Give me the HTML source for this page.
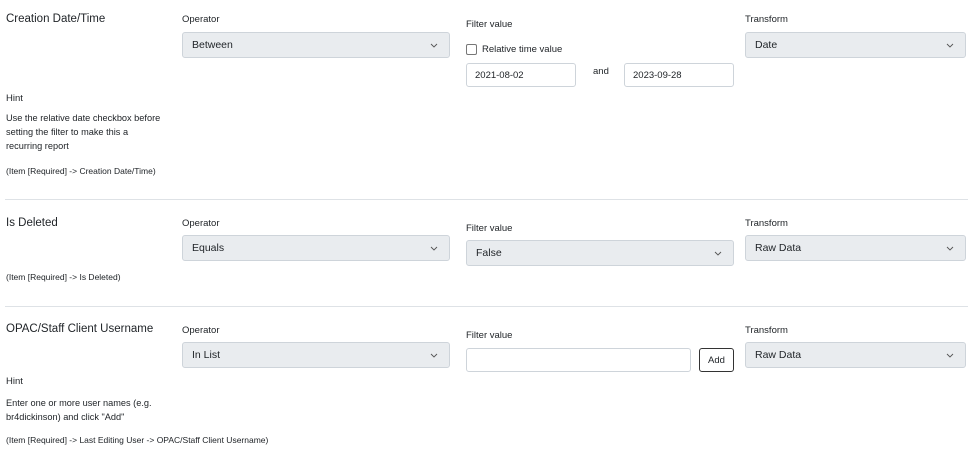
<!DOCTYPE html>
<html><head><meta charset="utf-8"><style>
body{margin:0;width:975px;height:456px;background:#fff;font-family:"Liberation Sans",sans-serif;color:#212529;position:relative;overflow:hidden}
.a{position:absolute;white-space:nowrap}
.t{font-size:11.5px}
.l{font-size:9.5px}
.s{font-size:8.5px}
.sel{position:absolute;background:#e9ecef;border:1px solid #ced4da;border-radius:3px;box-sizing:border-box;font-size:10.5px;padding-left:9px;display:flex;align-items:center}
.sel svg{position:absolute;right:11px;top:50%;margin-top:-2px}
.inp{position:absolute;border:1px solid #ced4da;border-radius:3px;box-sizing:border-box;font-size:9.5px;padding-left:8px;display:flex;align-items:center;background:#fff}
.hr{position:absolute;left:5px;right:7px;height:1px;background:#dee2e6}
</style></head><body>
<svg width="0" height="0" style="position:absolute"><defs><symbol id="c" viewBox="0 0 8 5"><path d="M1 1l3 3 3-3" fill="none" stroke="#555" stroke-width="0.9"/></symbol></defs></svg>

<div class="a t" style="left:6px;top:13px">Creation Date/Time</div>
<div class="a l" style="left:182px;top:14px">Operator</div>
<div class="sel" style="left:182px;top:32px;width:268px;height:26px">Between<svg width="8" height="5"><use href="#c"/></svg></div>
<div class="a l" style="left:466px;top:19px">Filter value</div>
<div class="a" style="left:466px;top:44px;width:11px;height:11px;border:1px solid #777;border-radius:2px;box-sizing:border-box"></div>
<div class="a l" style="left:482px;top:44px">Relative time value</div>
<div class="inp" style="left:466px;top:63px;width:110px;height:24px">2021-08-02</div>
<div class="a l" style="left:593px;top:66px">and</div>
<div class="inp" style="left:624px;top:63px;width:110px;height:24px">2023-09-28</div>
<div class="a l" style="left:745px;top:14px">Transform</div>
<div class="sel" style="left:745px;top:32px;width:221px;height:26px">Date<svg width="8" height="5"><use href="#c"/></svg></div>
<div class="a l" style="left:6px;top:93px">Hint</div>
<div class="a l" style="left:6px;top:111px;line-height:14px;font-size:9.2px">Use the relative date checkbox before<br>setting the filter to make this a<br>recurring report</div>
<div class="a s" style="left:6px;top:166px">(Item [Required] -&gt; Creation Date/Time)</div>
<div class="hr" style="top:199px"></div>

<div class="a t" style="left:6px;top:217px">Is Deleted</div>
<div class="a l" style="left:182px;top:218px">Operator</div>
<div class="sel" style="left:182px;top:235px;width:268px;height:26px">Equals<svg width="8" height="5"><use href="#c"/></svg></div>
<div class="a l" style="left:466px;top:223px">Filter value</div>
<div class="sel" style="left:466px;top:240px;width:268px;height:26px">False<svg width="8" height="5"><use href="#c"/></svg></div>
<div class="a l" style="left:745px;top:218px">Transform</div>
<div class="sel" style="left:745px;top:235px;width:221px;height:26px">Raw Data<svg width="8" height="5"><use href="#c"/></svg></div>
<div class="a s" style="left:6px;top:272px">(Item [Required] -&gt; Is Deleted)</div>
<div class="hr" style="top:306px"></div>

<div class="a t" style="left:6px;top:323px">OPAC/Staff Client Username</div>
<div class="a l" style="left:182px;top:325px">Operator</div>
<div class="sel" style="left:182px;top:342px;width:268px;height:26px">In List<svg width="8" height="5"><use href="#c"/></svg></div>
<div class="a l" style="left:466px;top:330px">Filter value</div>
<div class="inp" style="left:466px;top:348px;width:225px;height:24px"></div>
<div class="a" style="left:699px;top:348px;width:35px;height:24px;border:1px solid #333;border-radius:3px;box-sizing:border-box;font-size:9.5px;display:flex;align-items:center;justify-content:center">Add</div>
<div class="a l" style="left:745px;top:325px">Transform</div>
<div class="sel" style="left:745px;top:342px;width:221px;height:26px">Raw Data<svg width="8" height="5"><use href="#c"/></svg></div>
<div class="a l" style="left:6px;top:376px">Hint</div>
<div class="a l" style="left:6px;top:396px;line-height:14px;font-size:9.2px">Enter one or more user names (e.g.<br>br4dickinson) and click "Add"</div>
<div class="a s" style="left:6px;top:435px">(Item [Required] -&gt; Last Editing User -&gt; OPAC/Staff Client Username)</div>
</body></html>
